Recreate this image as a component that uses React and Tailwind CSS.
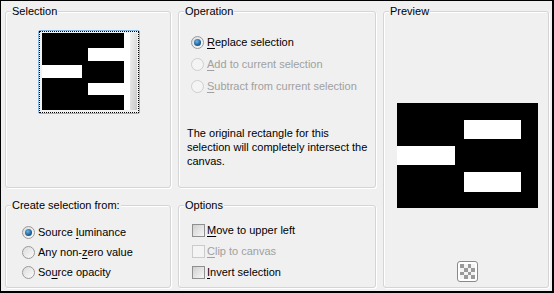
import React from "react";

function Radio({ checked, disabled }) {
  return (
    <span
      className={`relative flex items-center justify-center w-[13px] h-[13px] rounded-full border shrink-0 ${
        disabled
          ? "border-[#cfcfcf] bg-[#f4f4f4]"
          : "border-[#9a9a9a] bg-gradient-to-br from-[#dcdcdc] to-[#fbfbfb]"
      }`}
    >
      {checked && (
        <span className="w-[7px] h-[7px] rounded-full bg-[radial-gradient(circle_at_40%_35%,#6cb6e8,#1b5e96_60%,#0c3d68)]" />
      )}
    </span>
  );
}

function Check({ disabled }) {
  return (
    <span
      className={`w-[13px] h-[13px] border shrink-0 ${
        disabled
          ? "border-[#cbcbcb] bg-[#f4f4f4]"
          : "border-[#8e8f8f] bg-gradient-to-br from-[#d0d0d0] to-[#f7f7f7]"
      }`}
    />
  );
}

function Label({ pre, u, post, disabled }) {
  return (
    <span className={disabled ? "text-[#a0a0a0]" : "text-black"}>
      {pre}
      <span className="underline underline-offset-[2px]">{u}</span>
      {post}
    </span>
  );
}

function Group({ title, className, children }) {
  return (
    <fieldset className={`border border-[#d5d5d5] rounded-[3px] min-w-0 shadow-[inset_1px_1px_0_#fff,1px_1px_0_#fff] ${className}`}>
      <legend className="ml-[5px] px-[1px] leading-[14px] bg-[#f0f0f0]">{title}</legend>
      {children}
    </fieldset>
  );
}

export default function App() {
  return (
    <div className="w-[554px] h-[293px] bg-[#f0f0f0] border-t border-l border-r-2 border-b-2 border-black font-['Liberation_Sans',Arial,sans-serif] text-[11px] text-black">
      <div className="grid grid-cols-[166px_198px_166px] grid-rows-[184px_90px] gap-x-[7px] gap-y-[10px] pl-[4px] pt-[3px]">
        {/* Selection */}
        <Group title="Selection" className="col-start-1 row-start-1">
          <div className="ml-[32px] mt-[12px] w-[102px] h-[84px] border border-[#86b8e4] rounded-[2px]">
            <div className="w-full h-full border border-dotted border-black pl-[2px] pt-px">
              <svg width="95" height="77" viewBox="0 0 95 77">
                <defs>
                  <linearGradient id="sg" x1="0" x2="1" y1="0" y2="1">
                    <stop offset="0" stopColor="#f3f3f3" />
                    <stop offset="1" stopColor="#c9c9c9" />
                  </linearGradient>
                </defs>
                <rect x="0" y="0" width="82" height="77" fill="#000" />
                <rect x="82" y="0" width="6" height="77" fill="#fff" />
                <rect x="88" y="0" width="7" height="77" fill="url(#sg)" />
                <rect x="46" y="15" width="36" height="13" fill="#fff" />
                <rect x="0" y="32" width="40" height="13" fill="#fff" />
                <rect x="46" y="50" width="36" height="12" fill="#fff" />
              </svg>
            </div>
          </div>
        </Group>

        {/* Operation */}
        <Group title="Operation" className="col-start-2 row-start-1">
          <div className="flex flex-col pl-[12px] pt-[13px]">
            <div className="flex items-center gap-[3px] h-[22px]">
              <Radio checked />
              <Label u="R" post="eplace selection" />
            </div>
            <div className="flex items-center gap-[3px] h-[22px]">
              <Radio disabled />
              <Label u="A" post="dd to current selection" disabled />
            </div>
            <div className="flex items-center gap-[3px] h-[22px]">
              <Radio disabled />
              <Label u="S" post="ubtract from current selection" disabled />
            </div>
          </div>
          <p className="ml-[8px] mt-[29px] w-[184px] leading-[14px]">
            The original rectangle for this selection will completely intersect the canvas.
          </p>
        </Group>

        {/* Preview */}
        <Group title="Preview" className="col-start-3 row-start-1 row-span-2">
          <div className="flex flex-col">
            <svg className="ml-[13px] mt-[85px]" width="141" height="105" viewBox="0 0 141 105">
              <rect x="0" y="0" width="141" height="105" fill="#000" />
              <rect x="67" y="17" width="57" height="19" fill="#fff" />
              <rect x="0" y="43" width="58" height="19" fill="#fff" />
              <rect x="67" y="69" width="57" height="20" fill="#fff" />
            </svg>
            <div className="ml-[73px] mt-[53px] w-[21px] h-[21px] rounded-[3px] border border-[#8a8a8a] bg-white flex items-center justify-center">
              <svg width="15" height="15" viewBox="0 0 4 4" shapeRendering="crispEdges">
                <rect width="4" height="4" fill="#f4f4f4" />
                <rect x="0" y="0" width="1" height="1" fill="#9a9a9a" />
                <rect x="2" y="0" width="1" height="1" fill="#9a9a9a" />
                <rect x="1" y="1" width="1" height="1" fill="#9a9a9a" />
                <rect x="3" y="1" width="1" height="1" fill="#9a9a9a" />
                <rect x="0" y="2" width="1" height="1" fill="#9a9a9a" />
                <rect x="2" y="2" width="1" height="1" fill="#9a9a9a" />
                <rect x="1" y="3" width="1" height="1" fill="#9a9a9a" />
                <rect x="3" y="3" width="1" height="1" fill="#9a9a9a" />
              </svg>
            </div>
          </div>
        </Group>

        {/* Create selection from */}
        <Group title="Create selection from:" className="col-start-1 row-start-2">
          <div className="flex flex-col pl-[16px] pt-[10px]">
            <div className="flex items-center gap-[3px] h-[20px]">
              <Radio checked />
              <Label pre="Source " u="l" post="uminance" />
            </div>
            <div className="flex items-center gap-[3px] h-[20px]">
              <Radio />
              <Label pre="Any non-" u="z" post="ero value" />
            </div>
            <div className="flex items-center gap-[3px] h-[20px]">
              <Radio />
              <Label pre="So" u="u" post="rce opacity" />
            </div>
          </div>
        </Group>

        {/* Options */}
        <Group title="Options" className="col-start-2 row-start-2">
          <div className="flex flex-col pl-[13px] pt-[8px]">
            <div className="flex items-center gap-[2px] h-[21px]">
              <Check />
              <Label u="M" post="ove to upper left" />
            </div>
            <div className="flex items-center gap-[2px] h-[21px]">
              <Check disabled />
              <Label u="C" post="lip to canvas" disabled />
            </div>
            <div className="flex items-center gap-[2px] h-[21px]">
              <Check />
              <Label u="I" post="nvert selection" />
            </div>
          </div>
        </Group>
      </div>
    </div>
  );
}
